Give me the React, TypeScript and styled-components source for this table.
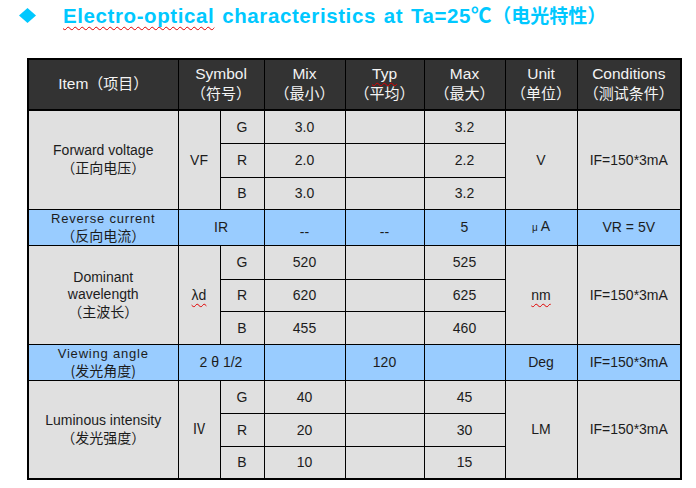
import React from "react";
import styled, { createGlobalStyle } from "styled-components";

const GlobalStyle = createGlobalStyle`
  html, body { margin: 0; padding: 0; background: #ffffff; }
  body { font-family: "Liberation Sans", Arial, "Noto Sans CJK SC", sans-serif; }
`;

const Page = styled.div`
  width: 696px;
  height: 488px;
  padding: 3px 0 0 19px;
  box-sizing: border-box;
  overflow: hidden;
`;

const TitleRow = styled.div`
  display: flex;
  align-items: center;
  height: 24px;
`;

const Title = styled.h1`
  margin: 0 0 0 27px;
  font-size: 20.5px;
  line-height: 24px;
  font-weight: bold;
  color: #00c8ff;
  white-space: nowrap;
  letter-spacing: 0.6px;
  word-spacing: 1.5px;
`;

const Cjk = styled.span`
  font-family: "Noto Sans CJK SC", sans-serif;
  font-weight: bold;
  font-size: 19px;
  letter-spacing: 0;
`;

const Squiggle = styled.span`
  text-decoration: underline wavy #e00000;
  text-decoration-thickness: 1px;
  text-underline-offset: 3px;
  text-decoration-skip-ink: none;
`;

const Table = styled.table`
  margin: 31px 0 0 8px;
  border-collapse: collapse;
  table-layout: fixed;
  width: 653px;
  border: 2px solid #000;
  color: #1c1c1c;
  font-size: 14px;
`;

const toneBg: Record<string, string> = {
  head: "#333333",
  gray: "#e0e0e0",
  blue: "#99ccff",
};

const Tr = styled.tr<{ $tone: "head" | "gray" | "blue"; $h: number }>`
  background: ${(p) => toneBg[p.$tone]};
  height: ${(p) => p.$h}px;
  color: ${(p) => (p.$tone === "head" ? "#f4f4f4" : "#1c1c1c")};
`;

const Th = styled.th`
  border: 1px solid #000;
  border-bottom-width: 2px;
  padding: 0 0 3px;
  font-weight: normal;
  font-size: 15.5px;
  line-height: 19px;
  text-align: center;
  vertical-align: middle;
`;

const Td = styled.td<{ $shift?: number }>`
  border: 1px solid #000;
  padding: ${(p) => (p.$shift ? `${p.$shift}px 0 0` : "0")};
  text-align: center;
  vertical-align: middle;
  line-height: 16px;
  white-space: nowrap;
`;

const Zh = styled.span<{ $head?: boolean }>`
  font-family: "Noto Sans CJK SC", sans-serif;
  font-size: ${(p) => (p.$head ? "15px" : "14px")};
  letter-spacing: 0;
`;

const ItemText = styled.div<{ $spaced?: boolean }>`
  font-size: ${(p) => (p.$spaced ? "13px" : "14px")};
  letter-spacing: ${(p) => (p.$spaced ? "0.8px" : "0")};
  line-height: 17px;
`;

const Micro = styled.span`
  font-size: 10px;
  margin-right: 3px;
`;

const Diamond = () => (
  <svg width="17" height="15" viewBox="0 0 17 15">
    <polygon points="8.5,0 17,7.5 8.5,15 0,7.5" fill="#00c8ff" />
  </svg>
);

const colWidths = [150, 42, 44, 81, 79, 81, 72, 104];

type Sub = { c: string; mix: string; max: string };

const Group = ({
  name,
  symbol,
  subs,
  unit,
  cond,
  heights,
}: {
  name: React.ReactNode;
  symbol: React.ReactNode;
  subs: Sub[];
  unit: React.ReactNode;
  cond: string;
  heights: number[];
}) => (
  <>
    {subs.map((s, i) => (
      <Tr $tone="gray" $h={heights[i]} key={s.c}>
        {i === 0 && <Td rowSpan={3}>{name}</Td>}
        {i === 0 && <Td rowSpan={3}>{symbol}</Td>}
        <Td>{s.c}</Td>
        <Td>{s.mix}</Td>
        <Td></Td>
        <Td>{s.max}</Td>
        {i === 0 && <Td rowSpan={3}>{unit}</Td>}
        {i === 0 && <Td rowSpan={3}>{cond}</Td>}
      </Tr>
    ))}
  </>
);

export default function App() {
  return (
    <Page>
      <GlobalStyle />
      <TitleRow>
        <Diamond />
        <Title>
          <Squiggle>Electro-optical</Squiggle> characteristics at Ta=25℃<Cjk>（电光特性）</Cjk>
        </Title>
      </TitleRow>
      <Table>
        <colgroup>
          {colWidths.map((w, i) => (
            <col key={i} style={{ width: w }} />
          ))}
        </colgroup>
        <thead>
          <Tr $tone="head" $h={51}>
            <Th>
              Item<Zh $head>（项目）</Zh>
            </Th>
            <Th colSpan={2}>
              Symbol
              <br />
              <Zh $head>（符号）</Zh>
            </Th>
            <Th>
              Mix
              <br />
              <Zh $head>（最小）</Zh>
            </Th>
            <Th>
              <Squiggle>Typ</Squiggle>
              <br />
              <Zh $head>（平均）</Zh>
            </Th>
            <Th>
              Max
              <br />
              <Zh $head>（最大）</Zh>
            </Th>
            <Th>
              Unit
              <br />
              <Zh $head>（单位）</Zh>
            </Th>
            <Th>
              Conditions
              <br />
              <Zh $head>（测试条件）</Zh>
            </Th>
          </Tr>
        </thead>
        <tbody>
          <Group
            name={
              <ItemText>
                Forward voltage
                <br />
                <Zh>（正向电压）</Zh>
              </ItemText>
            }
            symbol="VF"
            subs={[
              { c: "G", mix: "3.0", max: "3.2" },
              { c: "R", mix: "2.0", max: "2.2" },
              { c: "B", mix: "3.0", max: "3.2" },
            ]}
            unit="V"
            cond="IF=150*3mA"
            heights={[33, 34, 32]}
          />
          <Tr $tone="blue" $h={36}>
            <Td>
              <ItemText $spaced>
                Reverse current
                <br />
                <Zh>（反向电流）</Zh>
              </ItemText>
            </Td>
            <Td colSpan={2}>IR</Td>
            <Td $shift={9}>--</Td>
            <Td $shift={9}>--</Td>
            <Td>5</Td>
            <Td>
              <Micro>μ</Micro>A
            </Td>
            <Td>VR = 5V</Td>
          </Tr>
          <Group
            name={
              <ItemText>
                Dominant
                <br />
                wavelength
                <br />
                <Zh>（主波长）</Zh>
              </ItemText>
            }
            symbol={<Squiggle>λd</Squiggle>}
            subs={[
              { c: "G", mix: "520", max: "525" },
              { c: "R", mix: "620", max: "625" },
              { c: "B", mix: "455", max: "460" },
            ]}
            unit={<Squiggle>nm</Squiggle>}
            cond="IF=150*3mA"
            heights={[34, 32, 33]}
          />
          <Tr $tone="blue" $h={35}>
            <Td>
              <ItemText $spaced>
                Viewing angle
                <br />
                <Zh>(发光角度)</Zh>
              </ItemText>
            </Td>
            <Td colSpan={2}>2 θ 1/2</Td>
            <Td></Td>
            <Td>120</Td>
            <Td></Td>
            <Td>Deg</Td>
            <Td>IF=150*3mA</Td>
          </Tr>
          <Group
            name={
              <ItemText>
                Luminous intensity
                <br />
                <Zh>（发光强度）</Zh>
              </ItemText>
            }
            symbol="Ⅳ"
            subs={[
              { c: "G", mix: "40", max: "45" },
              { c: "R", mix: "20", max: "30" },
              { c: "B", mix: "10", max: "15" },
            ]}
            unit="LM"
            cond="IF=150*3mA"
            heights={[33, 33, 33]}
          />
        </tbody>
      </Table>
    </Page>
  );
}
